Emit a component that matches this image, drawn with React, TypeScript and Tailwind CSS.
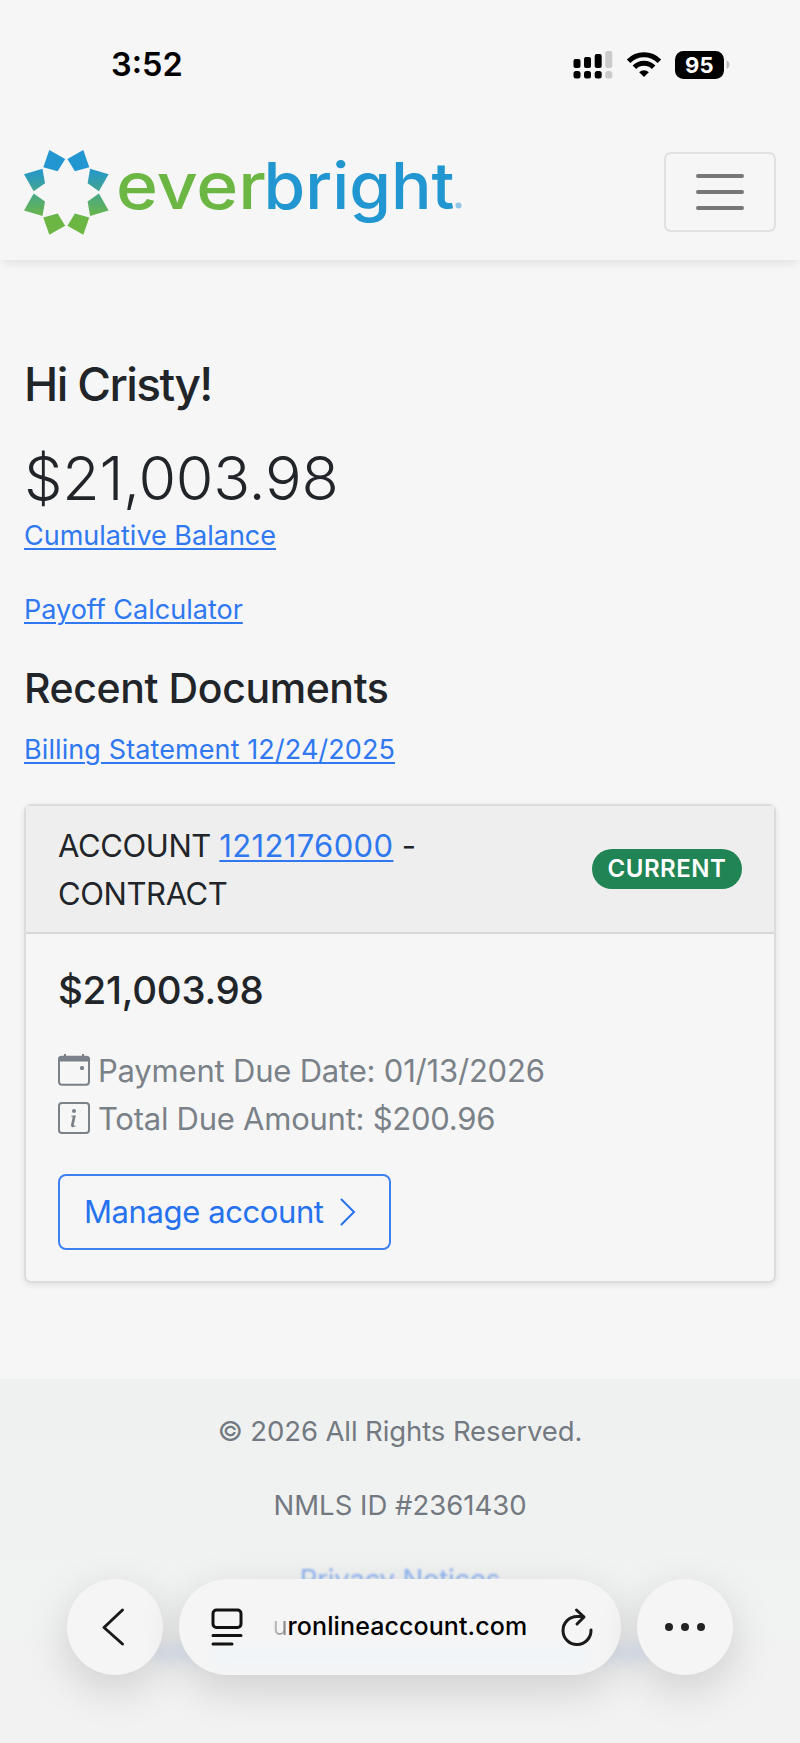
import type { ReactNode } from "react";

const petals = [
  "49.3,150 65.2,159 57.7,171.3 43.3,167.3",
  "24,174.3 42.5,168.7 45,183.3 33.7,191.2",
];

const flips = [
  "",
  "translate(132.6 0) scale(-1 1)",
];

export default function App() {
  return (
    <div className="relative flex h-[1743px] w-[800px] flex-col overflow-hidden bg-[#f6f6f6] font-['Inter',sans-serif] text-[#212529]">
      <StatusBar />
      <Header />
      <main className="flex flex-col items-start px-6 pt-24">
        <h1 className="text-[46px] leading-[56px] font-medium tracking-[-1.6px]">Hi Cristy!</h1>
        <p className="mt-[30px] text-[61px] leading-[72px] font-light tracking-[-0.3px]">$21,003.98</p>
        <TextLink className="mt-[2px]">Cumulative Balance</TextLink>
        <TextLink className="mt-[34px]">Payoff Calculator</TextLink>
        <h2 className="mt-[33px] text-[41px] leading-[50px] font-medium tracking-[-0.4px]">Recent Documents</h2>
        <TextLink className="mt-[17px] tracking-[0.1px]">Billing Statement 12/24/2025</TextLink>
        <AccountCard />
      </main>
      <Footer />
      <BrowserBar />
    </div>
  );
}

function TextLink({ className, children }: { className: string; children: ReactNode }) {
  return (
    <a
      className={`text-[27px] leading-10 text-[#2f78f0] underline decoration-2 underline-offset-[3px] ${className}`}
    >
      {children}
    </a>
  );
}

function StatusBar() {
  return (
    <div className="flex h-[130px] shrink-0 items-center justify-between pr-[70px] pl-[111px]">
      <span className="text-[32.5px] leading-9 font-semibold text-black">3:52</span>
      <svg className="h-[32px] w-[160px]" viewBox="570 49 160 32">
        <g fill="#000">
          <rect x="573.5" y="59" width="7" height="9" rx="2" />
          <rect x="584" y="57" width="7" height="11" rx="2" />
          <rect x="594.7" y="54" width="7" height="14" rx="2" />
          <rect x="573.5" y="71" width="7" height="7.5" rx="2.5" />
          <rect x="584" y="71" width="7" height="7.5" rx="2.5" />
          <rect x="594.7" y="71" width="7" height="7.5" rx="2.5" />
        </g>
        <g fill="#cbcbcb">
          <rect x="605.3" y="51" width="7" height="17" rx="2" />
          <rect x="605.3" y="71" width="7" height="7.5" rx="2.5" />
        </g>
        <g fill="none" stroke="#000" strokeWidth="5">
          <path d="M628.6 61.2a21.5 21.5 0 0 1 30.8 0" />
          <path d="M634.4 67.2a13.6 13.6 0 0 1 19.2 0" />
        </g>
        <path d="M644 77l-4.8-4.8a6.8 6.8 0 0 1 9.6 0z" fill="#000" />
        <rect x="675" y="51" width="49" height="28" rx="8.5" fill="#000" />
        <path d="M726.5 60.5c4 1.2 4 7.2 0 8.4z" fill="#bdbdbd" />
        <text x="699.3" y="72.8" fontSize="22" fontWeight="700" fill="#fff" textAnchor="middle">
          95
        </text>
      </svg>
    </div>
  );
}

function Header() {
  return (
    <header className="flex h-[130px] shrink-0 items-start justify-between px-6 pt-[10px] shadow-[0_7px_8px_-3px_rgba(0,0,0,0.08)]">
      <Logo />
      <button className="mt-3 flex h-20 w-[112px] flex-col items-center justify-center gap-3 rounded-[7px] border-2 border-[#e0e0e0]">
        <span className="h-1 w-12 rounded-sm bg-[#777]" />
        <span className="h-1 w-12 rounded-sm bg-[#777]" />
        <span className="h-1 w-12 rounded-sm bg-[#777]" />
      </button>
    </header>
  );
}

function Logo() {
  return (
    <svg className="h-[100px] w-[442px]" viewBox="24 140 442 100">
      <defs>
        <linearGradient id="ring" gradientUnits="userSpaceOnUse" x1="0" y1="168" x2="0" y2="218">
          <stop offset="0" stopColor="#2196d1" />
          <stop offset="1" stopColor="#6cb744" />
        </linearGradient>
        <mask id="petals" maskUnits="userSpaceOnUse" x="20" y="145" width="94" height="94">
          {flips.map((flip) => (
            <g key={flip} transform={flip} fill="#fff">
              {petals.map((p) => (
                <polygon key={p} points={p} />
              ))}
              <g transform="translate(0 384.8) scale(1 -1)">
                {petals.map((p) => (
                  <polygon key={p} points={p} />
                ))}
              </g>
            </g>
          ))}
        </mask>
      </defs>
      <rect x="20" y="145" width="94" height="94" fill="url(#ring)" mask="url(#petals)" />
      <text x="116" y="209" fontSize="65" fontWeight="500" fill="#6cb744" textLength="150" lengthAdjust="spacingAndGlyphs">
        ever
      </text>
      <text x="263.5" y="209" fontSize="65" fontWeight="500" fill="#2196d1" textLength="191" lengthAdjust="spacingAndGlyphs">
        bright
      </text>
      <circle cx="458.5" cy="205.5" r="3" fill="#8fc6e6" />
    </svg>
  );
}

function AccountCard() {
  return (
    <section className="mt-[34px] w-full rounded-[7px] border-2 border-[#dcdcdc] shadow-[0_2px_6px_rgba(0,0,0,0.09)]">
      <div className="flex items-center justify-between border-b-2 border-[#d6d6d6] bg-[#eeeeee] px-8 pt-4 pb-[14px]">
        <p className="w-[400px] text-[31px] leading-[48px] tracking-[-0.4px]">
          ACCOUNT{" "}
          <a className="tracking-[0.35px] text-[#2f78f0] underline decoration-2 underline-offset-[3px]">1212176000</a> -
          <br />
          CONTRACT
        </p>
        <span className="-mt-0.5 flex h-10 w-[150px] items-center justify-center rounded-full bg-[#218454] text-[24px] font-semibold tracking-[0.5px] text-white">
          CURRENT
        </span>
      </div>
      <div className="flex flex-col items-start px-8 pt-[33px] pb-[31px]">
        <p className="text-[38.5px] leading-[46px] font-medium tracking-[-0.25px]">$21,003.98</p>
        <div className="mt-[34px] text-[31px] leading-[48px] tracking-[-0.2px] text-[#7a8188]">
          <p className="flex items-center gap-2">
            <CalendarIcon />
            Payment Due Date: 01/13/2026
          </p>
          <p className="flex items-center gap-2 tracking-[-0.25px]">
            <InfoIcon />
            Total Due Amount: $200.96
          </p>
        </div>
        <button className="mt-[31px] flex h-[76px] w-[333px] items-center rounded-[8px] border-2 border-[#3d80f2] pl-6 text-[31px] tracking-[-0.4px] text-[#2672ee]">
          Manage account
          <svg className="ml-4 h-7 w-4" viewBox="0 0 16 28" fill="none" stroke="currentColor" strokeWidth="2" strokeLinecap="round">
            <path d="M1.5 1.5L14 14 1.5 26.5" />
          </svg>
        </button>
      </div>
    </section>
  );
}

function CalendarIcon() {
  return (
    <svg className="-mt-0.5 h-8 w-8" viewBox="0 0 32 32">
      <rect x="1" y="2.8" width="30" height="28" rx="3" fill="none" stroke="currentColor" strokeWidth="2" />
      <path d="M0 7.500V5.500Q0 2 3.500 2H6V0h2v2h16V0h2v2h2.500Q32 2 32 5.500v2z" fill="currentColor" />
      <rect x="22" y="12" width="4" height="4" rx="1.500" fill="currentColor" />
    </svg>
  );
}

function InfoIcon() {
  return (
    <svg className="-mt-0.5 h-8 w-8" viewBox="0 0 16 16" fill="currentColor">
      <path d="M14 1a1 1 0 0 1 1 1v12a1 1 0 0 1-1 1H2a1 1 0 0 1-1-1V2a1 1 0 0 1 1-1zM2 0a2 2 0 0 0-2 2v12a2 2 0 0 0 2 2h12a2 2 0 0 0 2-2V2a2 2 0 0 0-2-2z" />
      <path d="m8.930 6.588-2.290.287-.082.380.450.083c.294.070.352.176.288.469l-.738 3.468c-.194.897.105 1.319.808 1.319.545 0 1.178-.252 1.465-.598l.088-.416c-.200.176-.492.246-.686.246-.275 0-.375-.193-.304-.533zM9 4.500a1 1 0 1 1-2 0 1 1 0 0 1 2 0" />
    </svg>
  );
}

function Footer() {
  return (
    <footer className="mt-24 flex grow flex-col items-center bg-linear-to-b from-[#eff1f1] to-[#f2f2f2] pt-8 text-[27.5px] leading-10 tracking-[-0.1px] whitespace-nowrap text-[#737980]">
      <p>© 2026 All Rights Reserved.</p>
      <p className="mt-[34px] tracking-normal">NMLS ID #2361430</p>
      <a className="mt-[34px] tracking-[-0.2px] text-[#8db4f0] blur-[1px]">Privacy Notices</a>
      <span className="mt-[46px] h-4 w-[500px] rounded-full bg-[#dfe6f3] blur-[7px]" />
    </footer>
  );
}

function BrowserBar() {
  return (
    <nav className="absolute inset-x-0 bottom-[68px] flex justify-center gap-4 text-black">
      <BarPill className="w-24">
        <svg className="mr-[5px] h-10 w-6" viewBox="0 0 24 40" fill="none" stroke="#1a1a1a" strokeWidth="3" strokeLinecap="round">
          <path d="M21.500 3L3 20.500 21.500 37" strokeLinejoin="round" />
        </svg>
      </BarPill>
      <BarPill className="w-[442px]">
        {/* page content showing faintly through the glass */}
        <span className="absolute inset-x-8 bottom-2 h-5 rounded-full bg-[#f0f4f8] blur-[5px]" />
        <svg className="relative ml-1 h-10 w-8" viewBox="0 0 32 40" fill="none" stroke="#111" strokeWidth="3" strokeLinecap="round">
          <rect x="2" y="3" width="28" height="17.500" rx="3.500" />
          <path d="M2 28.500h28M2 37h19" />
        </svg>
        <span className="relative mr-[34px] ml-[30px] text-[25px] font-medium tracking-[0.1px]">
          <span className="bg-linear-to-r from-[#c8c8c8] to-[#777] bg-clip-text font-normal text-transparent">u</span>
          ronlineaccount.com
        </span>
        <svg className="relative h-10 w-8" viewBox="0 0 32 40" fill="none" stroke="#1a1a1a" strokeWidth="3" strokeLinecap="round" strokeLinejoin="round">
          <path d="M30 23A14 14 0 1 1 16 9.500H22" />
          <path d="M15.500 3L23 10 16 17" />
        </svg>
      </BarPill>
      <BarPill className="w-24">
        <svg className="h-2 w-10" viewBox="0 0 40 8" fill="#222">
          <circle cx="4" cy="4" r="4" />
          <circle cx="20" cy="4" r="4" />
          <circle cx="36" cy="4" r="4" />
        </svg>
      </BarPill>
    </nav>
  );
}

function BarPill({ className, children }: { className: string; children: ReactNode }) {
  return (
    <div
      className={`relative flex h-24 items-center justify-center overflow-hidden rounded-full bg-[#f5f5f5] shadow-[0_14px_44px_rgba(0,0,0,0.15)] ${className}`}
    >
      {children}
    </div>
  );
}
